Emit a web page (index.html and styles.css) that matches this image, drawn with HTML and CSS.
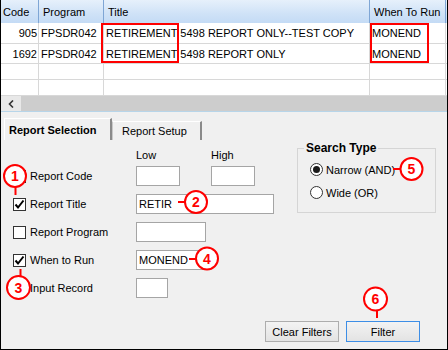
FILE: index.html
```html
<!DOCTYPE html>
<html lang="en">
<head>
  <meta charset="UTF-8">
  <title>Report Selection</title>
  <link rel="stylesheet" href="styles.css">
</head>
<body>
  <div class="window">
    <div class="grid-view">
      <div class="row head">
        <div class="cell first">Code</div>
        <div class="cell">Program</div>
        <div class="cell">Title</div>
        <div class="cell">When To Run</div>
      </div>
      <div class="row r-tall">
        <div class="cell num">905</div>
        <div class="cell">FPSDR042</div>
        <div class="cell">RETIREMENT 5498 REPORT ONLY--TEST COPY</div>
        <div class="cell">MONEND</div>
      </div>
      <div class="row r-mid">
        <div class="cell num">1692</div>
        <div class="cell">FPSDR042</div>
        <div class="cell">RETIREMENT 5498 REPORT ONLY</div>
        <div class="cell">MONEND</div>
      </div>
      <div class="row r-short">
        <div class="cell"></div><div class="cell"></div><div class="cell"></div><div class="cell"></div>
      </div>
      <div class="row r-short">
        <div class="cell"></div><div class="cell"></div><div class="cell"></div><div class="cell"></div>
      </div>
      <div class="hscroll">
        <div class="scroll-btn">
          <svg width="6" height="8" viewBox="0 0 6 8"><path d="M5 0.5 L1.5 4 L5 7.5" fill="none" stroke="#333" stroke-width="1.6"/></svg>
        </div>
        <div class="scroll-track"></div>
      </div>
      <!-- red highlight boxes -->
      <div class="mark mark-title"></div>
      <div class="mark mark-when"></div>
    </div>

    <div class="tabs">
      <div class="tab-strip">
        <div class="tab active">Report Selection</div>
        <div class="tab">Report Setup</div>
      </div>
      <div class="tab-page">
        <div class="page-top">
          <div class="criteria">
            <div></div><div></div>
            <div class="col-head">Low</div>
            <div class="col-head">High</div>

            <div class="box"></div>
            <div class="label">Report Code</div>
            <div class="field w44"></div>
            <div class="field w44"></div>

            <div class="box checked"><svg width="11" height="11" viewBox="0 0 11 11"><path d="M1.5 5.5 L4 8.5 L9.5 1.5" fill="none" stroke="#000" stroke-width="2"/></svg></div>
            <div class="label">Report Title</div>
            <div class="field wide">RETIR</div>

            <div class="box"></div>
            <div class="label">Report Program</div>
            <div class="field w70"></div>
            <div></div>

            <div class="box checked"><svg width="11" height="11" viewBox="0 0 11 11"><path d="M1.5 5.5 L4 8.5 L9.5 1.5" fill="none" stroke="#000" stroke-width="2"/></svg></div>
            <div class="label">When to Run</div>
            <div class="field w70">MONEND</div>
            <div></div>

            <div class="box"></div>
            <div class="label">Input Record</div>
            <div class="field w32"></div>
            <div></div>
          </div>

          <fieldset class="search-type">
            <legend>Search Type</legend>
            <div class="radio-row"><span class="radio on"></span>Narrow (AND)</div>
            <div class="radio-row"><span class="radio"></span>Wide (OR)</div>
          </fieldset>
        </div>

        <div class="actions">
          <button class="btn">Clear Filters</button>
          <button class="btn default">Filter</button>
        </div>
      </div>
    </div>

    <!-- numbered callouts -->
    <svg class="callouts" width="448" height="350" viewBox="0 0 448 350">
      <g fill="#fff" stroke="#f00" stroke-width="2">
        <line x1="15.5" y1="186" x2="15.5" y2="195"/>
        <circle cx="15" cy="176" r="11"/>
        <line x1="178" y1="202" x2="186" y2="202"/>
        <circle cx="196" cy="202" r="11"/>
        <line x1="20.5" y1="277" x2="20.5" y2="269"/>
        <circle cx="18.5" cy="287.5" r="11.5"/>
        <line x1="189" y1="259" x2="197" y2="259"/>
        <circle cx="207" cy="258.5" r="11"/>
        <line x1="393" y1="169" x2="401" y2="169"/>
        <circle cx="411.5" cy="169" r="11"/>
        <line x1="377" y1="310" x2="377" y2="318"/>
        <circle cx="375.5" cy="299" r="11.5"/>
      </g>
      <g class="num-text" fill="#f00" text-anchor="middle">
        <text x="15" y="181">1</text>
        <text x="196" y="207">2</text>
        <text x="18.5" y="292.5">3</text>
        <text x="207" y="263.5">4</text>
        <text x="411.5" y="174">5</text>
        <text x="375.5" y="304">6</text>
      </g>
    </svg>
  </div>
</body>
</html>
```

FILE: styles.css
```css
* {
  margin: 0;
  padding: 0;
  box-sizing: border-box;
}

body {
  width: 448px;
  height: 350px;
  font-family: "Liberation Sans", Arial, sans-serif;
  font-size: 11px;
  color: #000;
  background: #fff;
}

.window {
  position: relative;
  width: 448px;
  height: 350px;
  border: 1px solid #000;
  border-top: 0;
  background: #f0f0f0;
  display: flex;
  flex-direction: column;
}

/* data grid */
.grid-view {
  position: relative;
  height: 111px;
  background: #fff;
}

.row {
  display: grid;
  grid-template-columns: 38px 65px 266px 76px;
  border-bottom: 1px solid #d8d8d8;
}

.row .cell {
  border-right: 1px solid #d8d8d8;
  padding-left: 2px;
  white-space: nowrap;
  overflow: hidden;
  display: flex;
  align-items: center;
}

.row .cell.num {
  justify-content: flex-end;
  padding: 0 1px 0 0;
}

.row.head {
  height: 23px;
  border-bottom: 0;
  background: linear-gradient(#e6f0fb, #cfe2f7 60%, #c4dbf5);
}

.row.head .cell {
  border-right: 1px solid #7fa6d5;
  padding-left: 4px;
}

.row.head .cell.first {
  padding-left: 2px;
}

.r-tall {
  height: 21px;
}

.r-mid {
  height: 20px;
}

.r-short {
  height: 16px;
}

.r-short:last-of-type {
  border-bottom: 0;
}

.hscroll {
  display: flex;
  height: 15px;
}

.scroll-btn {
  width: 20px;
  background: #e8e8e8;
  display: flex;
  align-items: center;
  justify-content: center;
}

.scroll-track {
  flex: 1;
  background: #cdcdcd;
}

.mark {
  position: absolute;
  top: 23px;
  height: 40px;
  border: 2px solid #f00;
}

.mark-title {
  left: 100px;
  width: 78px;
}

.mark-when {
  left: 369px;
  width: 59px;
}

/* tabs */
.tabs {
  flex: 1;
  display: flex;
  flex-direction: column;
  border-top: 1px solid #b7d5e9;
}

.tab-strip {
  display: flex;
  align-items: flex-end;
  height: 28px;
  padding-left: 3px;
}

.tab {
  height: 19px;
  width: 90px;
  padding-left: 9px;
  display: flex;
  align-items: center;
  border-top: 1px solid #fff;
  border-left: 1px solid #c8c8c8;
  border-right: 2px solid #8a8a8a;
}

.tab.active {
  height: 22px;
  width: 108px;
  padding-left: 4px;
  font-weight: bold;
  border-left-color: #fff;
}

.tab-page {
  flex: 1;
  display: flex;
  flex-direction: column;
  padding-left: 12px;
}

.page-top {
  display: flex;
  align-items: flex-start;
}

.criteria {
  display: grid;
  grid-template-columns: 17px 106px 75px 62px;
  grid-template-rows: 22px repeat(5, 28px);
  align-items: center;
}

.col-head {
  align-self: end;
  line-height: 13px;
}

.box {
  width: 13px;
  height: 13px;
  border: 1px solid #333;
  background: #fff;
  display: flex;
  align-items: center;
  justify-content: center;
}

.field {
  height: 20px;
  border: 1px solid #a5a5a5;
  background: #fff;
  padding-left: 2px;
  line-height: 18px;
}

.w44 {
  width: 44px;
}

.w70 {
  width: 70px;
}

.w32 {
  width: 32px;
}

.field.wide {
  grid-column: span 2;
  width: 138px;
}

.search-type {
  margin: 1px 0 0 24px;
  width: 139px;
  border: 1px solid #d5d5d5;
  padding: 3px 6px 8px;
}

.search-type legend {
  padding: 0 2px;
  font-size: 12px;
  font-weight: bold;
  line-height: 14px;
}

.radio-row {
  display: flex;
  align-items: center;
  gap: 3px;
  height: 23px;
  padding-left: 6px;
}

.radio {
  width: 13px;
  height: 13px;
  border-radius: 50%;
  border: 1px solid #333;
  background: #fff;
  display: flex;
  align-items: center;
  justify-content: center;
}

.radio.on::after {
  content: '';
  width: 7px;
  height: 7px;
  border-radius: 50%;
  background: #1a1a1a;
}

.actions {
  margin-top: auto;
  display: flex;
  justify-content: flex-end;
  gap: 7px;
  padding: 0 27px 7px 0;
}

.btn {
  width: 74px;
  height: 21px;
  border: 1px solid #adadad;
  background: linear-gradient(#f3f3f3, #e3e3e3);
  font: inherit;
  color: #000;
}

.btn.default {
  border-color: #3d8ee6;
}

/* callouts drawn over the form */
.callouts {
  position: absolute;
  left: -1px;
  top: 0;
  pointer-events: none;
}

.num-text {
  font-family: "Liberation Sans", Arial, sans-serif;
  font-size: 14px;
  font-weight: bold;
}
```
